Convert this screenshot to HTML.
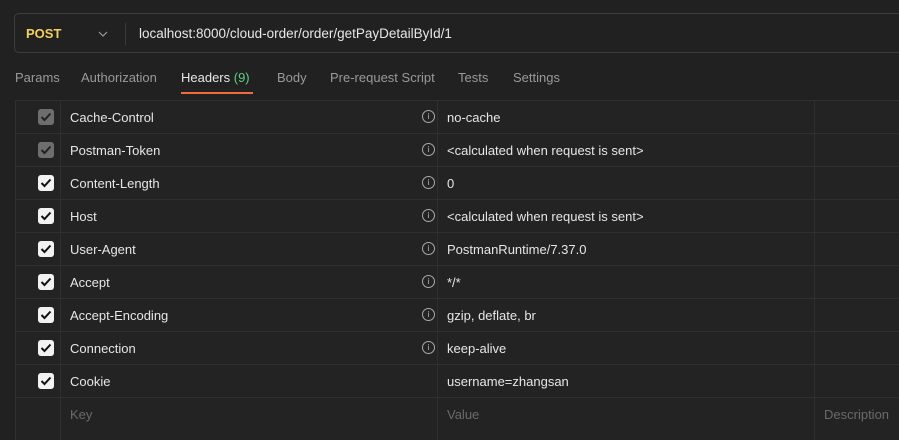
<!DOCTYPE html><html><head><style>
body{margin:0;width:899px;height:429px;background:#212121;font-family:"Liberation Sans",sans-serif;color:#e6e6e6;overflow:hidden;position:relative;font-size:13px}
.url{position:absolute;left:14px;top:13px;width:900px;height:40px;border:1px solid #3c3c3c;border-radius:5px;box-sizing:border-box}
.post{position:absolute;left:26px;top:26px;color:#f5d05d;font-weight:bold;font-size:13px}
.sep{position:absolute;left:125px;top:23px;width:1px;height:22px;background:#3a3a3a}
.u{position:absolute;left:139px;top:26px;font-size:13.5px;color:#e8e8e8}
.tab{position:absolute;top:70px;color:#9a9a9a;font-size:13px}
.ul{position:absolute;left:181px;top:92px;width:72px;height:2px;background:#f26b3a}
.tbl{position:absolute;left:15px;top:100px;width:900px;height:340px;background:#232323;border-left:1px solid #2f2f2f}
.row{position:absolute;left:15px;width:900px;height:33px;border-top:1px solid #2f2f2f;box-sizing:border-box}
.vl{position:absolute;top:100px;width:1px;height:340px;background:#2f2f2f}
.cb{position:absolute;left:23px;top:8px;width:16px;height:16px;border-radius:3px;background:#f2f2f2}
.cb.g{background:#6e6e6e}
.cb svg{position:absolute;left:2px;top:3px}
.k{position:absolute;left:55px;top:9px}
.v{position:absolute;left:432px;top:9px}
.i{position:absolute;left:407px;top:9px;width:11px;height:11px;border:1px solid #aaa;border-radius:50%;font-size:8px;line-height:11px;text-align:center;color:#bbb;font-family:"DejaVu Sans"}
.ph{color:#6a6a6a}
</style></head><body>
<div class="url"></div>
<div class="post">POST</div>
<svg style="position:absolute;left:98px;top:31px" width="10" height="6"><path d="M1 1L5 5L9 1" stroke="#999" fill="none" stroke-width="1.2"/></svg>
<div class="sep"></div>
<div class="u">localhost:8000/cloud-order/order/getPayDetailById/1</div>
<div class="tab" style="left:15px">Params</div>
<div class="tab" style="left:81px">Authorization</div>
<div class="tab" style="left:181px;color:#e8e8e8">Headers <span style="color:#5fcf80">(9)</span></div>
<div class="tab" style="left:277px">Body</div>
<div class="tab" style="left:330px">Pre-request Script</div>
<div class="tab" style="left:458px">Tests</div>
<div class="tab" style="left:513px">Settings</div>
<div class="ul"></div>
<div class="tbl"></div>
<div class="vl" style="left:60px"></div>
<div class="vl" style="left:437px"></div>
<div class="vl" style="left:814px"></div>
<div class="row" style="top:100px"><div class="cb g"><svg width="12" height="10"><path d="M1.5 5L4.5 8L10.5 1.5" stroke="#222" stroke-width="2" fill="none"/></svg></div><div class="k">Cache-Control</div><div class="i">i</div><div class="v">no-cache</div></div>
<div class="row" style="top:133px"><div class="cb g"><svg width="12" height="10"><path d="M1.5 5L4.5 8L10.5 1.5" stroke="#222" stroke-width="2" fill="none"/></svg></div><div class="k">Postman-Token</div><div class="i">i</div><div class="v">&lt;calculated when request is sent&gt;</div></div>
<div class="row" style="top:166px"><div class="cb"><svg width="12" height="10"><path d="M1.5 5L4.5 8L10.5 1.5" stroke="#111" stroke-width="2" fill="none"/></svg></div><div class="k">Content-Length</div><div class="i">i</div><div class="v">0</div></div>
<div class="row" style="top:199px"><div class="cb"><svg width="12" height="10"><path d="M1.5 5L4.5 8L10.5 1.5" stroke="#111" stroke-width="2" fill="none"/></svg></div><div class="k">Host</div><div class="i">i</div><div class="v">&lt;calculated when request is sent&gt;</div></div>
<div class="row" style="top:232px"><div class="cb"><svg width="12" height="10"><path d="M1.5 5L4.5 8L10.5 1.5" stroke="#111" stroke-width="2" fill="none"/></svg></div><div class="k">User-Agent</div><div class="i">i</div><div class="v">PostmanRuntime/7.37.0</div></div>
<div class="row" style="top:265px"><div class="cb"><svg width="12" height="10"><path d="M1.5 5L4.5 8L10.5 1.5" stroke="#111" stroke-width="2" fill="none"/></svg></div><div class="k">Accept</div><div class="i">i</div><div class="v">*/*</div></div>
<div class="row" style="top:298px"><div class="cb"><svg width="12" height="10"><path d="M1.5 5L4.5 8L10.5 1.5" stroke="#111" stroke-width="2" fill="none"/></svg></div><div class="k">Accept-Encoding</div><div class="i">i</div><div class="v">gzip, deflate, br</div></div>
<div class="row" style="top:331px"><div class="cb"><svg width="12" height="10"><path d="M1.5 5L4.5 8L10.5 1.5" stroke="#111" stroke-width="2" fill="none"/></svg></div><div class="k">Connection</div><div class="i">i</div><div class="v">keep-alive</div></div>
<div class="row" style="top:364px"><div class="cb"><svg width="12" height="10"><path d="M1.5 5L4.5 8L10.5 1.5" stroke="#111" stroke-width="2" fill="none"/></svg></div><div class="k">Cookie</div><div class="v">username=zhangsan</div></div>
<div class="row" style="top:397px"><div class="k ph">Key</div><div class="v ph">Value</div><div class="ph" style="position:absolute;left:809px;top:9px">Description</div></div>
</body></html>
